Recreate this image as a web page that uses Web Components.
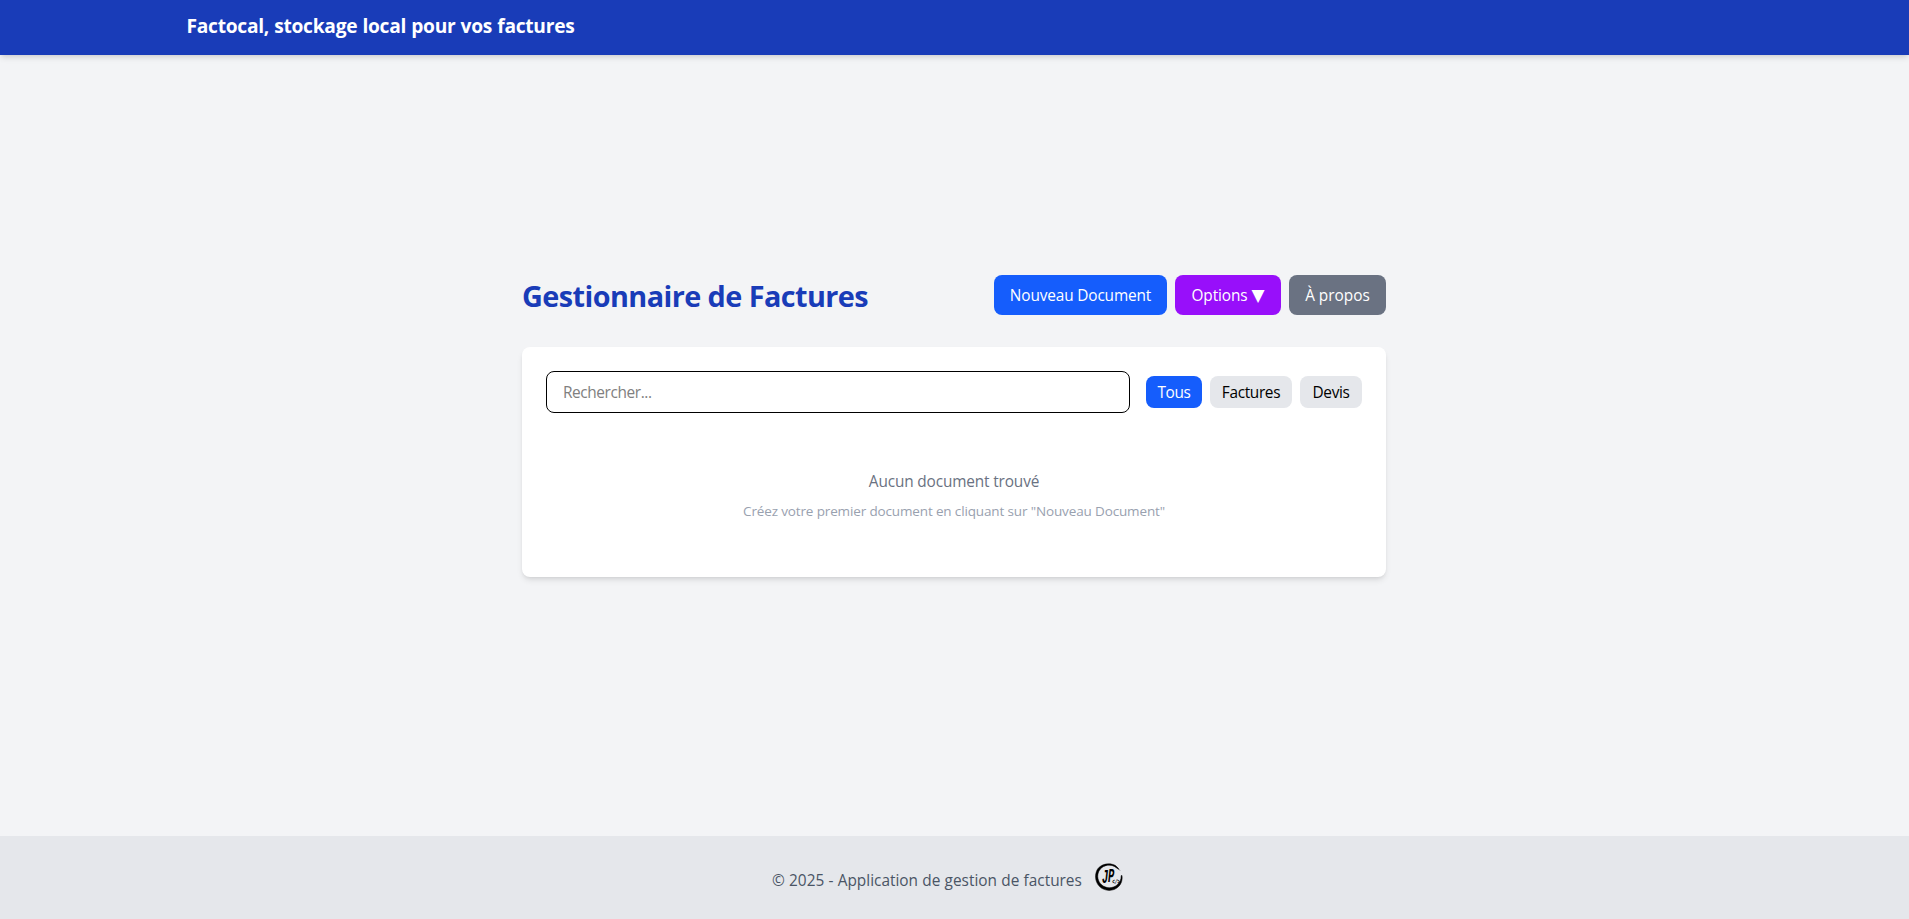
<!DOCTYPE html>
<html lang="fr">
<head>
<meta charset="utf-8">
<title>Factocal</title>
<style>
body{margin:0;font-family:"Segoe UI","Open Sans","Noto Sans",sans-serif;font-size:15.4px;line-height:24px;color:#000}
</style>
</head>
<body>
<facto-app></facto-app>
<script>
function define(name, html){
  customElements.define(name, class extends HTMLElement{
    constructor(){super();this.attachShadow({mode:'open'}).innerHTML=html;}
  });
}
define('facto-header', `<style>
:host{display:block;height:55px;background:#193cb8;color:#fff;box-shadow:0 4px 6px -1px rgba(0,0,0,.1),0 2px 4px -2px rgba(0,0,0,.1)}
div{max-width:1536px;margin:0 auto;padding-top:12px}
h1{margin:0;font-size:19.2px;line-height:28px;font-weight:700;letter-spacing:-.27px;word-spacing:.4px;white-space:nowrap}
</style><div><h1><slot></slot></h1></div>`);
define('facto-button', `<style>
:host{display:block;flex:none}
button{display:block;width:100%;height:40px;border:0;border-radius:8px;padding:2px 0 0;font:inherit;letter-spacing:inherit;color:#fff;background:var(--bg,#155dfc);white-space:nowrap;text-align:center}
</style><button><slot></slot></button>`);
define('facto-chip', `<style>
:host{display:block;flex:none}
button{display:block;width:100%;height:32px;border:0;border-radius:8px;padding:2px 0 0;font:inherit;letter-spacing:inherit;color:#000;background:#e5e7eb;white-space:nowrap}
:host([active]) button{background:#155dfc;color:#fff}
</style><button><slot></slot></button>`);
define('facto-toolbar', `<style>
:host{display:flex;justify-content:space-between;align-items:center;height:40px;margin-bottom:32px}
h2{margin:1px 0 0;font-size:28.8px;line-height:36px;font-weight:700;color:#193cb8;letter-spacing:-.56px;white-space:nowrap}
.actions{display:flex;gap:8px}
.new{width:173px;letter-spacing:-.15px}
.options{width:106px;letter-spacing:-.1px;--bg:#980ffa}
.about{width:97px;letter-spacing:0;--bg:#6a7282}
.arrow{font:17px/1 "DejaVu Sans",sans-serif}
</style><h2>Gestionnaire de Factures</h2>
<div class="actions"><facto-button class="new">Nouveau Document</facto-button><facto-button class="options">Options <span class="arrow">▼</span></facto-button><facto-button class="about">À propos</facto-button></div>`);
define('facto-search', `<style>
:host{display:block;flex:1}
input{display:block;box-sizing:border-box;width:100%;height:42px;border:1px solid #000;border-radius:8px;padding:1px 16px 0;font:inherit;letter-spacing:-.4px;background:#fff;outline:0}
input::placeholder{color:#808080;opacity:1}
</style><input type="text" placeholder="Rechercher...">`);
define('facto-card', `<style>
:host{display:block;box-sizing:border-box;height:230px;padding:24px;background:#fff;border-radius:8px;box-shadow:0 4px 6px -1px rgba(0,0,0,.1),0 2px 4px -2px rgba(0,0,0,.1)}
.filters{display:flex;align-items:center;gap:16px}
.chips{display:flex;gap:8px;letter-spacing:-.35px}
.all{width:56px}.inv{width:82px}.quote{width:62px}
.empty{padding-top:56px;text-align:center}
p{margin:0;white-space:nowrap}
.main{color:#6a7282;letter-spacing:-.15px;padding-top:1px}
.hint{margin-top:7px;font-size:13.5px;line-height:20px;color:#99a1af;letter-spacing:-.14px}
</style><div class="filters"><facto-search></facto-search><div class="chips"><facto-chip class="all" active>Tous</facto-chip><facto-chip class="inv">Factures</facto-chip><facto-chip class="quote">Devis</facto-chip></div></div>
<div class="empty"><p class="main">Aucun document trouvé</p><p class="hint">Créez votre premier document en cliquant sur "Nouveau Document"</p></div>`);
define('facto-logo', `<style>
:host{display:block;width:28px;height:28px}svg{display:block}
</style><svg width="28" height="28" viewBox="0 0 28 28">
<path stroke="#000" stroke-width=".5" d="M20.5 2.5C15 -.5 6.500 .5 2.600 6C-.7 11.500 -.1 19 4.600 23.600C9.800 28.600 18.500 28.600 23.400 23.800C26.400 21 27.700 16.800 27 12.500L26.200 12.600C26.200 16.700 24.800 19.800 22 22C17.500 25.700 10.600 25.700 6.400 21.600C2.700 18.300 1.700 12.600 3.900 8.200C6.700 2.700 13.800 .6 19.300 3.400L23.600 6.300L23.200 5.200Z"/>
<path d="M21.500 3.600L25 7.600" stroke="#000" stroke-width=".7" opacity=".6"/>
<text transform="scale(.5 1)" font-family="Liberation Mono, monospace" font-style="italic" font-weight="700" font-size="21"><tspan x="14" y="20.500">J</tspan><tspan x="26" y="18.800">P</tspan><tspan x="34.500" y="21" font-size="7" textLength="15" lengthAdjust="spacingAndGlyphs">&lt;/&gt;</tspan></text></svg>`);
define('facto-footer', `<style>
:host{display:flex;box-sizing:border-box;height:83px;background:#e5e7eb;color:#4a5565;justify-content:center;align-items:flex-start;padding:27px 0 0}
p{margin:6px 14px 0 0;white-space:nowrap;width:309px;word-spacing:.25px}
facto-logo{margin-right:14px}
</style><p>© 2025 - Application de gestion de factures</p><facto-logo></facto-logo>`);
define('facto-app', `<style>
:host{display:flex;flex-direction:column;height:919px;background:#f3f4f6}
main{flex:1;display:flex;flex-direction:column;justify-content:center;box-sizing:border-box;width:897px;margin:0 auto;padding:0 17px 39px 16px}
</style><facto-header>Factocal, stockage local pour vos factures</facto-header>
<main><facto-toolbar></facto-toolbar><facto-card></facto-card></main>
<facto-footer></facto-footer>`);
</script>
</body>
</html>
